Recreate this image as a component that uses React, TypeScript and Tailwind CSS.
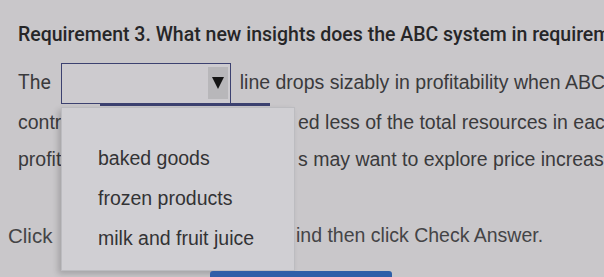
import React from "react";

const options = ["", "baked goods", "frozen products", "milk and fruit juice"];

export default function App() {
  return (
    <div className="relative h-[277px] w-[604px] overflow-hidden bg-[#c9c7ca] font-['Liberation_Sans',Arial,sans-serif] text-[#3a3a3c]">
      {/* heading */}
      <div className="whitespace-nowrap pl-[18px] pt-[23px] font-['Roboto',sans-serif] text-[19.5px] font-medium leading-[24px] text-[#262628]">
        Requirement 3. What new insights does the ABC system in requirement 2 provide?
      </div>

      {/* sentence lines */}
      <div className="mt-[15px] flex flex-col whitespace-nowrap text-[19.5px]">
        <div className="flex h-[42px] items-center pl-[18px]">
          <span className="shrink-0 font-['Roboto',sans-serif] text-[19.5px]">The</span>
          <div className="ml-[10px] flex h-[41px] w-[170px] shrink-0 items-center justify-end border-[1.5px] border-[#3c4170] bg-[#cdcbcf] pr-[2px]">
            <div className="flex h-[32px] w-[20px] items-center justify-center bg-[#b8b7ba]">
              <svg width="12" height="14" viewBox="0 0 12 14">
                <polygon points="0,1 12,1 6,13" fill="#151515" />
              </svg>
            </div>
          </div>
          <span className="ml-[9px] shrink-0">line drops sizably in profitability when ABC is used.</span>
        </div>
        <div className="flex h-[38px] items-center">
          <span className="w-[298px] shrink-0 pl-[18px]">contr</span>
          <span>ed less of the total resources in each department.</span>
        </div>
        <div className="flex h-[36px] items-center">
          <span className="w-[298px] shrink-0 pl-[18px]">profit</span>
          <span>s may want to explore price increases.</span>
        </div>
        <div className="h-[38px]" />
        <div className="flex h-[40px] items-center text-[#444446]">
          <span className="w-[296px] shrink-0 pl-[8px] text-[20.5px]">Click</span>
          <span>ind then click Check Answer.</span>
        </div>
      </div>

      {/* underline below select */}
      <div className="absolute left-[100px] top-[103px] h-[3px] w-[170px] bg-[#3c4170]" />

      {/* open dropdown list */}
      <div className="absolute left-[61px] top-[107px] flex h-[164px] w-[234px] flex-col border border-[#bcbcc0] bg-[#d0cfd3] shadow-[-3px_3px_6px_rgba(0,0,0,0.18)]">
        {options.map((o, i) => (
          <div
            key={i}
            className={`flex items-center pl-[36px] text-[19.5px] text-[#333335] ${i === 0 ? "h-[31px]" : "h-[40px]"}`}
          >
            {o}
          </div>
        ))}
      </div>

      {/* check answer button peeking */}
      <div className="absolute left-[210px] top-[271px] h-[10px] w-[182px] rounded-t-[3px] bg-[#2f5fa8]" />
    </div>
  );
}
